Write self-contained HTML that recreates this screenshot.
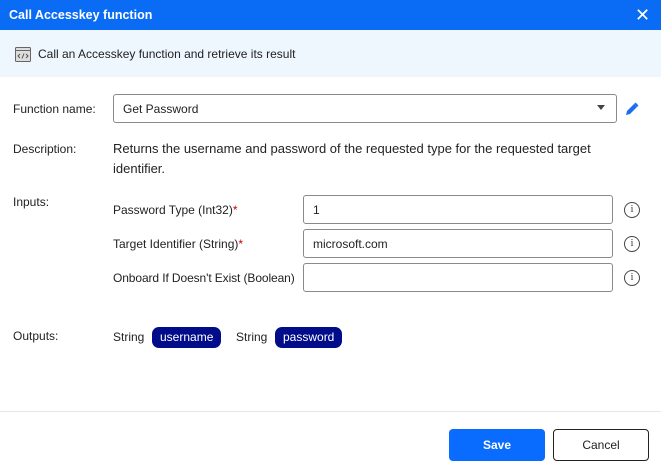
<!DOCTYPE html>
<html><head><style>
*{box-sizing:border-box;margin:0;padding:0}
body{width:661px;height:472px;background:#fff;font-family:"Liberation Sans",sans-serif;font-size:12px;color:#222;position:relative;overflow:hidden}
.a{position:absolute}
.title{left:0;top:0;width:661px;height:30px;background:#0a6cf5;color:#fff;font-weight:bold;font-size:12.5px;line-height:30px;padding-left:9px}
.band{left:0;top:30px;width:661px;height:47px;background:#eef6fe}
.inp{border:1px solid #8a8a8a;border-radius:3px;background:#fff;height:29px;line-height:29px;padding-left:9px;font-size:12px}
.info{width:16px;height:16px;border:1px solid #444;border-radius:50%;font-size:10px;text-align:center;line-height:14px;color:#333;font-family:"Liberation Serif",serif}
.chip{background:#000c8a;color:#fff;border-radius:7px;height:21px;line-height:21px;padding:0 8px;font-size:12px}
.req{color:#c00}
</style></head><body>
<div class="a title">Call Accesskey function</div>
<div class="a" style="left:635px;top:6px;color:#fff;font-size:18px;line-height:18px">&#x2715;</div>
<div class="a band"></div>
<svg class="a" style="left:15px;top:47px" width="16" height="15" viewBox="0 0 16 15"><rect x="0.5" y="0.5" width="15" height="14" rx="1" fill="#ddd" stroke="#666"/><line x1="1" y1="3.5" x2="15" y2="3.5" stroke="#666"/><path d="M5 7l-2 2 2 2M11 7l2 2-2 2M9 6.5l-2 5" stroke="#555" fill="none"/></svg>
<div class="a" style="left:38px;top:47px;font-size:12px">Call an Accesskey function and retrieve its result</div>

<div class="a" style="left:13px;top:102px">Function name:</div>
<div class="a inp" style="left:113px;top:94px;width:504px">Get Password</div>
<div class="a" style="left:597px;top:105px;width:0;height:0;border-left:4px solid transparent;border-right:4px solid transparent;border-top:5px solid #444"></div>
<svg class="a" style="left:624px;top:101px" width="16" height="16" viewBox="0 0 16 16"><path d="M2 14l1-4 7-7 3 3-7 7z" fill="#1a6ff0"/><path d="M10 3l1.5-1.5 3 3L13 6z" fill="#1a6ff0"/></svg>

<div class="a" style="left:13px;top:142px">Description:</div>
<div class="a" style="left:113px;top:139px;font-size:13px;line-height:20px;width:530px">Returns the username and password of the requested type for the requested target identifier.</div>

<div class="a" style="left:13px;top:195px">Inputs:</div>
<div class="a" style="left:113px;top:203px">Password Type (Int32)<span class="req">*</span></div>
<div class="a inp" style="left:303px;top:195px;width:310px">1</div>
<div class="a info" style="left:624px;top:202px">i</div>
<div class="a" style="left:113px;top:237px">Target Identifier (String)<span class="req">*</span></div>
<div class="a inp" style="left:303px;top:229px;width:310px">microsoft.com</div>
<div class="a info" style="left:624px;top:236px">i</div>
<div class="a" style="left:113px;top:271px;letter-spacing:-0.1px">Onboard If Doesn't Exist (Boolean)</div>
<div class="a inp" style="left:303px;top:263px;width:310px"></div>
<div class="a info" style="left:624px;top:270px">i</div>

<div class="a" style="left:13px;top:329px">Outputs:</div>
<div class="a" style="left:113px;top:330px">String</div>
<div class="a chip" style="left:152px;top:327px">username</div>
<div class="a" style="left:236px;top:330px">String</div>
<div class="a chip" style="left:275px;top:327px">password</div>

<div class="a" style="left:0;top:411px;width:661px;height:1px;background:#e6e6e6"></div>
<div class="a" style="left:449px;top:429px;width:96px;height:32px;background:#0a6cff;border-radius:4px;color:#fff;font-weight:bold;text-align:center;line-height:32px">Save</div>
<div class="a" style="left:553px;top:429px;width:96px;height:32px;border:1px solid #222;border-radius:4px;text-align:center;line-height:30px">Cancel</div>
</body></html>
